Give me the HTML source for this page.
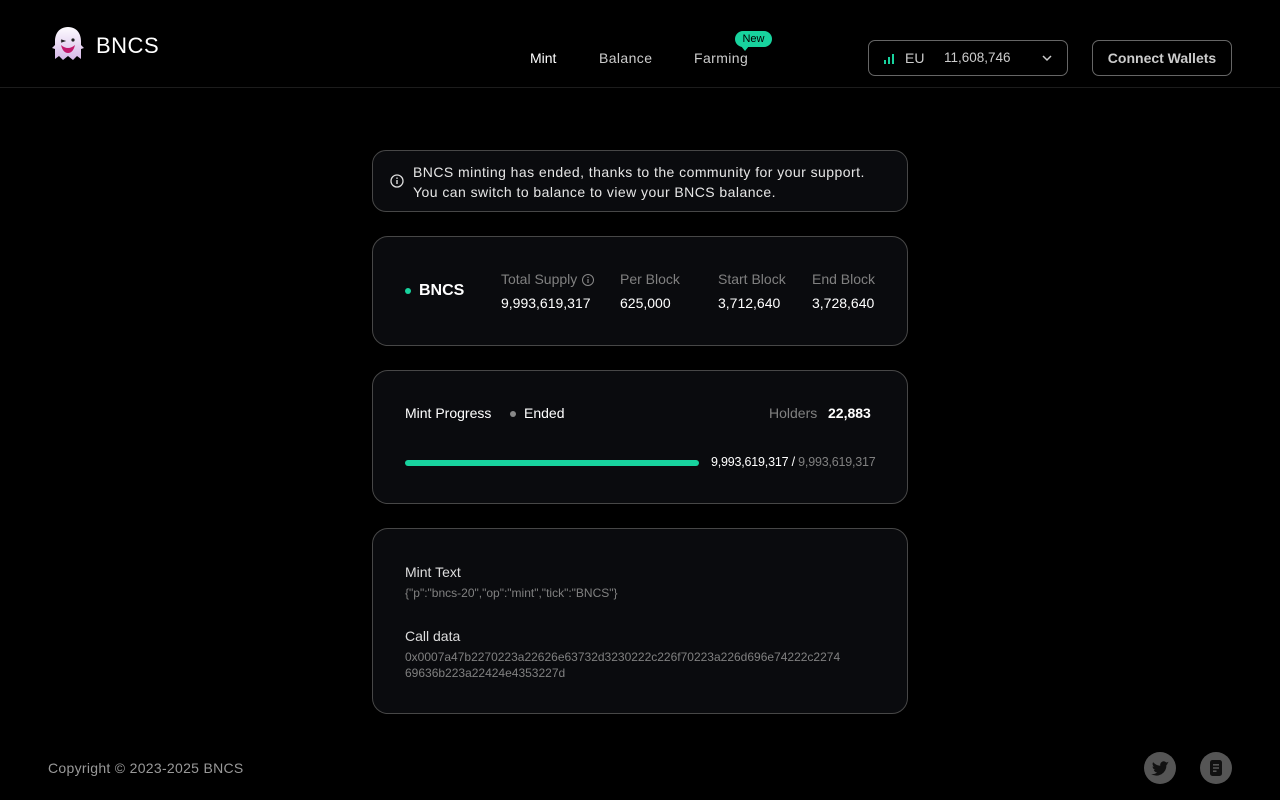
<!DOCTYPE html>
<html><head><meta charset="utf-8">
<style>
*{margin:0;padding:0;box-sizing:border-box}
body{width:1280px;height:800px;background:#000;color:#fff;font-family:"Liberation Sans",sans-serif;position:relative;overflow:hidden}
.hdr{position:absolute;left:0;top:0;width:1280px;height:88px;border-bottom:1px solid #1c1c1c}
.abs{position:absolute}
.card{position:absolute;left:372px;width:536px;background:#0a0b0e;border:1px solid #474747;border-radius:16px}
.g{color:#808080}
</style></head><body>
<div class="hdr">
  <svg class="abs" style="left:50px;top:25px" width="36" height="38" viewBox="0 0 36 38">
    <defs><linearGradient id="gh" x1="0" y1="0" x2="0" y2="1"><stop offset="0" stop-color="#fdfbff"/><stop offset="1" stop-color="#d6b8e8"/></linearGradient></defs>
    <path d="M18 2C9 2 5 9 5 16v4l-3 3 3 1v10l4-3 4 4 5-4 5 4 4-4 4 3V24l3-1-3-3v-4C31 9 27 2 18 2z" fill="url(#gh)"/>
    <path d="M11 15l3 1-3 1" stroke="#222" stroke-width="1.4" fill="none"/>
    <circle cx="23" cy="15" r="1.6" fill="#222"/>
    <path d="M11 20q7 6 14 0q-2 8-7 8q-5 0-7-8z" fill="#c2186b"/>
  </svg>
  <div class="abs" style="left:96px;top:33px;font-size:22px;letter-spacing:.5px">BNCS</div>
  <div class="abs" style="left:530px;top:50px;font-size:14px">Mint</div>
  <div class="abs" style="left:599px;top:50px;font-size:14px;color:#ccc;letter-spacing:.4px">Balance</div>
  <div class="abs" style="left:694px;top:50px;font-size:14px;color:#ccc;letter-spacing:.4px">Farming</div>
  <div class="abs" style="left:735px;top:31px;width:37px;height:16px;background:#18d39e;border-radius:8px;color:#000;font-size:11px;text-align:center;line-height:16px">New</div>
  <div class="abs" style="left:741px;top:46px;width:0;height:0;border-left:4px solid transparent;border-right:4px solid transparent;border-top:5px solid #18d39e"></div>
  <div class="abs" style="left:868px;top:40px;width:200px;height:36px;border:1px solid #666;border-radius:7px;font-size:14px;color:#ccc">
    <svg class="abs" style="left:14px;top:12px" width="12" height="12"><rect x="1" y="7" width="2" height="4" fill="#18d39e"/><rect x="5" y="4" width="2" height="7" fill="#18d39e"/><rect x="9" y="1" width="2" height="10" fill="#18d39e"/></svg>
    <span class="abs" style="left:36px;top:9px">EU</span>
    <span class="abs" style="left:75px;top:9px;font-size:13.5px">11,608,746</span>
    <svg class="abs" style="left:172px;top:13px" width="12" height="8"><path d="M2 2l4 4 4-4" stroke="#ccc" stroke-width="1.5" fill="none"/></svg>
  </div>
  <div class="abs" style="left:1092px;top:40px;width:140px;height:36px;border:1px solid #666;border-radius:7px;font-size:14px;color:#ccc;text-align:center;line-height:34px;font-weight:bold">Connect Wallets</div>
</div>

<div class="card" style="top:150px;height:62px;border-radius:14px">
  <svg class="abs" style="left:17px;top:23px" width="14" height="14"><circle cx="7" cy="7" r="6" stroke="#ddd" stroke-width="1.3" fill="none"/><rect x="6.3" y="6" width="1.4" height="4" fill="#ddd"/><rect x="6.3" y="3.5" width="1.4" height="1.4" fill="#ddd"/></svg>
  <div class="abs" style="left:40px;top:11px;font-size:14px;line-height:20px;color:#e6e6e6;letter-spacing:.45px">BNCS minting has ended, thanks to the community for your support.<br>You can switch to balance to view your BNCS balance.</div>
</div>

<div class="card" style="top:236px;height:110px">
  <div class="abs" style="left:32px;top:51px;width:6px;height:6px;border-radius:3px;background:#18d39e"></div>
  <div class="abs" style="left:46px;top:45px;font-size:16px;font-weight:bold">BNCS</div>
  <div class="abs g" style="left:128px;top:34px;font-size:14px">Total Supply</div>
  <svg class="abs" style="left:208px;top:36px" width="14" height="14"><circle cx="7" cy="7" r="5.5" stroke="#888" stroke-width="1" fill="none"/><rect x="6.4" y="6" width="1.2" height="4" fill="#888"/><rect x="6.4" y="3.8" width="1.2" height="1.2" fill="#888"/></svg>
  <div class="abs" style="left:128px;top:58px;font-size:14px">9,993,619,317</div>
  <div class="abs g" style="left:247px;top:34px;font-size:14px">Per Block</div>
  <div class="abs" style="left:247px;top:58px;font-size:14px">625,000</div>
  <div class="abs g" style="left:345px;top:34px;font-size:14px">Start Block</div>
  <div class="abs" style="left:345px;top:58px;font-size:14px">3,712,640</div>
  <div class="abs g" style="left:439px;top:34px;font-size:14px">End Block</div>
  <div class="abs" style="left:439px;top:58px;font-size:14px">3,728,640</div>
</div>

<div class="card" style="top:370px;height:134px">
  <div class="abs" style="left:32px;top:34px;font-size:14px">Mint Progress</div>
  <div class="abs" style="left:137px;top:40px;width:6px;height:6px;border-radius:3px;background:#888"></div>
  <div class="abs" style="left:151px;top:34px;font-size:14px">Ended</div>
  <div class="abs g" style="left:396px;top:34px;font-size:14px">Holders</div>
  <div class="abs" style="left:455px;top:34px;font-size:14px;font-weight:bold">22,883</div>
  <div class="abs" style="left:32px;top:89px;width:294px;height:6px;border-radius:3px;background:#18d39e"></div>
  <div class="abs" style="left:338px;top:84px;font-size:12.5px;letter-spacing:-.2px">9,993,619,317 / <span class="g">9,993,619,317</span></div>
</div>

<div class="card" style="top:528px;height:186px">
  <div class="abs" style="left:32px;top:35px;font-size:14px;color:#ddd">Mint Text</div>
  <div class="abs g" style="left:32px;top:57px;font-size:12px">{"p":"bncs-20","op":"mint","tick":"BNCS"}</div>
  <div class="abs" style="left:32px;top:99px;font-size:14px;color:#ddd">Call data</div>
  <div class="abs g" style="left:32px;top:120px;font-size:12px;line-height:16px;white-space:nowrap">0x0007a47b2270223a22626e63732d3230222c226f70223a226d696e74222c2274<br>69636b223a22424e4353227d</div>
</div>

<div class="abs" style="left:48px;top:760px;font-size:14px;color:#999;letter-spacing:.3px">Copyright © 2023-2025 BNCS</div>
<svg class="abs" style="left:1144px;top:752px" width="32" height="32" viewBox="0 0 32 32"><circle cx="16" cy="16" r="16" fill="#555"/><path d="M25 11c-.6.3-1.3.5-2 .6.7-.4 1.3-1.1 1.5-1.9-.7.4-1.4.7-2.2.8a3.5 3.5 0 0 0-6 3.2c-2.9-.1-5.5-1.5-7.2-3.6-1 1.6-.5 3.7 1.1 4.7-.6 0-1.1-.2-1.6-.4 0 1.7 1.2 3.2 2.8 3.5-.5.1-1.1.2-1.6.1.5 1.4 1.8 2.4 3.3 2.4A7 7 0 0 1 7 22a10 10 0 0 0 15.4-8.9c.7-.5 1.2-1.100 1.6-1.7z" fill="#111"/></svg>
<svg class="abs" style="left:1200px;top:752px" width="32" height="32" viewBox="0 0 32 32"><circle cx="16" cy="16" r="16" fill="#555"/><rect x="10" y="8" width="12" height="16" rx="2.5" fill="#111"/><rect x="13" y="12" width="6" height="1.6" fill="#555"/><rect x="13" y="15.2" width="6" height="1.6" fill="#555"/><rect x="13" y="18.4" width="3.5" height="1.6" fill="#555"/></svg>
</body></html>
